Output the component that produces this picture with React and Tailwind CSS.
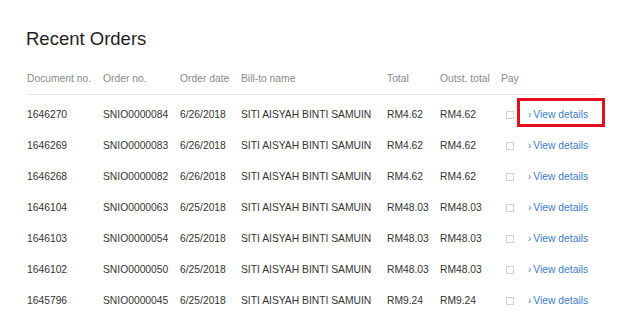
import React from 'react'

const orders = [
  { doc: "1646270", order: "SNIO0000084", date: "6/26/2018", total: "RM4.62", outst: "RM4.62" },
  { doc: "1646269", order: "SNIO0000083", date: "6/26/2018", total: "RM4.62", outst: "RM4.62" },
  { doc: "1646268", order: "SNIO0000082", date: "6/26/2018", total: "RM4.62", outst: "RM4.62" },
  { doc: "1646104", order: "SNIO0000063", date: "6/25/2018", total: "RM48.03", outst: "RM48.03" },
  { doc: "1646103", order: "SNIO0000054", date: "6/25/2018", total: "RM48.03", outst: "RM48.03" },
  { doc: "1646102", order: "SNIO0000050", date: "6/25/2018", total: "RM48.03", outst: "RM48.03" },
  { doc: "1645796", order: "SNIO0000045", date: "6/25/2018", total: "RM9.24", outst: "RM9.24" },
];

const cols = "grid grid-cols-[76px_77px_61px_146px_53px_61px_27px_70px] items-center";

const App = () => {
  return (
    <div className="w-[624px] h-[319px] overflow-hidden bg-white pt-[30px] pl-[27px] font-['Liberation_Sans',Arial,sans-serif]">
      <h2 className="text-[18.5px] leading-[18px] text-[#1e1e1e] -ml-[1px]">Recent Orders</h2>

      {/* Header */}
      <div className={`${cols} mt-[15px] h-[32px] border-b border-[#e6e6e6] w-[571px] text-[10.3px] text-[#8a8a8a]`}>
        <div>Document no.</div>
        <div>Order no.</div>
        <div>Order date</div>
        <div>Bill-to name</div>
        <div>Total</div>
        <div>Outst. total</div>
        <div className="col-span-2">Pay</div>
      </div>

      {/* Rows */}
      <div className="pt-[4px]">
        {orders.map((o, i) => (
          <div key={o.doc} className={`${cols} h-[31px] text-[10.3px] leading-[15px] text-[#333333]`}>
            <div>{o.doc}</div>
            <div>{o.order}</div>
            <div>{o.date}</div>
            <div>SITI AISYAH BINTI SAMUIN</div>
            <div>{o.total}</div>
            <div>{o.outst}</div>
            <div>
              <span className="block ml-[5px] w-[8px] h-[8px] border border-[#d2d2d2] bg-white"></span>
            </div>
            <div className="relative">
              <a href="#details" className="text-[#3d7cc6] whitespace-nowrap">
                <span className="text-[10px] text-[#4f7fb8]">›</span><span className="ml-[2px]">View details</span>
              </a>
              {i === 0 && (
                <span className="absolute left-[-11px] top-[-9px] w-[88px] h-[29px] border-[3px] border-[#e2111c]"></span>
              )}
            </div>
          </div>
        ))}
      </div>
    </div>
  )
}

export default App
